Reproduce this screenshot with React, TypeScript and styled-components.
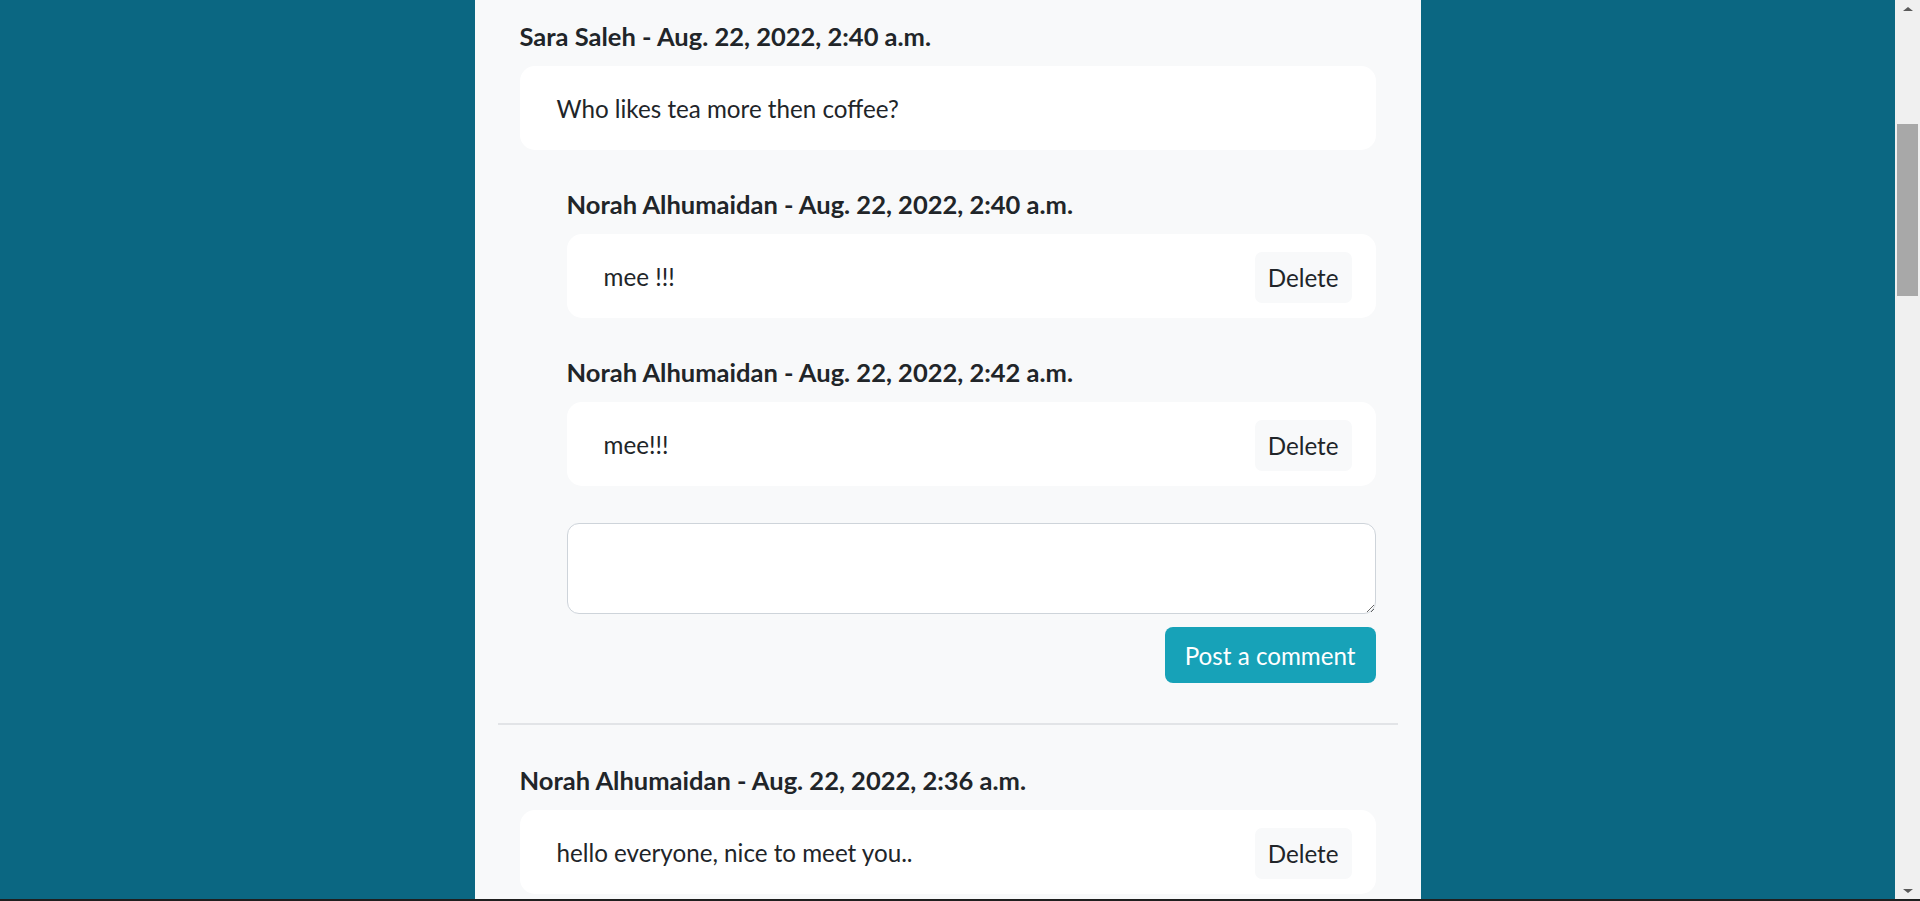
import React from "react";
import styled, { createGlobalStyle } from "styled-components";

type Comment = {
  id: number;
  author: string;
  date: string;
  text: string;
  own: boolean;
};

type Thread = Comment & { replies: Comment[] };

const threads: Thread[] = [
  {
    id: 2,
    author: "Sara Saleh",
    date: "Aug. 22, 2022, 2:40 a.m.",
    text: "Who likes tea more then coffee?",
    own: false,
    replies: [
      {
        id: 21,
        author: "Norah Alhumaidan",
        date: "Aug. 22, 2022, 2:40 a.m.",
        text: "mee !!!",
        own: true,
      },
      {
        id: 22,
        author: "Norah Alhumaidan",
        date: "Aug. 22, 2022, 2:42 a.m.",
        text: "mee!!!",
        own: true,
      },
    ],
  },
  {
    id: 3,
    author: "Norah Alhumaidan",
    date: "Aug. 22, 2022, 2:36 a.m.",
    text: "hello everyone, nice to meet you..",
    own: true,
    replies: [],
  },
];

const GlobalStyle = createGlobalStyle`
  body {
    margin: 0;
    background: #0b6782;
    color: #212529;
    font-family: Lato, "Noto Sans", sans-serif;
    overflow: hidden;
  }
`;

const Window = styled.div`
  display: flex;
  height: 100vh;
  box-sizing: border-box;
  border-bottom: 2px solid #1f1f1f;
`;

const Viewport = styled.div`
  flex: 1;
  display: flex;
  justify-content: center;
  overflow: hidden;
  background: #0b6782;
`;

const Column = styled.main`
  width: 946px;
  flex-shrink: 0;
  box-sizing: border-box;
  padding: 0 23px;
  background: #f8f9fa;
`;

const ThreadBox = styled.section`
  padding: 40px 22px;
  border-bottom: 2px solid #e2e4e7;

  &:first-child {
    padding-top: 21px;
  }
`;

const Block = styled.div`
  & + & {
    margin-top: 39px;
  }
`;

const Replies = styled.div`
  margin-top: 39px;
  padding-left: 47px;
`;

const Author = styled.h5`
  margin: 0 0 15px;
  font-size: 25.5px;
  line-height: 30px;
  font-weight: 700;
`;

const Bubble = styled.div`
  display: flex;
  align-items: center;
  justify-content: space-between;
  height: 84px;
  box-sizing: border-box;
  padding: 0 24px 0 37px;
  background: #fff;
  border-radius: 15px;
`;

const Body = styled.p`
  margin: 0;
  font-size: 24.2px;
  line-height: 37px;
`;

const DeleteButton = styled.button`
  height: 51px;
  margin-top: 3px;
  padding: 0 13px;
  border: 0;
  border-radius: 7px;
  background: #f8f9fa;
  color: #212529;
  font-family: inherit;
  font-size: 24.2px;
`;

const ReplyForm = styled.form`
  display: flex;
  flex-direction: column;
  align-items: flex-end;
  gap: 13px;
  margin-top: 37px;
`;

const TextArea = styled.textarea`
  width: 100%;
  height: 91px;
  box-sizing: border-box;
  padding: 10px 16px;
  border: 1px solid #ced4da;
  border-radius: 12px;
  background: #fff;
  font-family: inherit;
  font-size: 24px;
  resize: vertical;
`;

const PostButton = styled.button`
  height: 56px;
  padding: 0 20px;
  border: 0;
  border-radius: 8px;
  background: #17a2b8;
  color: #fff;
  font-family: inherit;
  font-size: 24.2px;
`;

const Scrollbar = styled.aside`
  width: 25px;
  flex-shrink: 0;
  display: flex;
  flex-direction: column;
  background: #f0f0f0;
`;

const Arrow = styled.div<{ $down?: boolean }>`
  height: 17px;
  display: flex;
  justify-content: center;
  align-items: center;

  &::before {
    content: "";
    border-left: 5px solid transparent;
    border-right: 5px solid transparent;
    ${(p) =>
      p.$down ? "border-top: 4px solid #5a5a5a;" : "border-bottom: 4px solid #5a5a5a;"}
  }
`;

const Track = styled.div`
  flex: 1;
  padding: 107px 2px 0;
`;

const Thumb = styled.div`
  height: 172px;
  background: #a8a8a8;
`;

function CommentItem({ comment }: { comment: Comment }) {
  return (
    <Block>
      <Author>
        {comment.author} - {comment.date}
      </Author>
      <Bubble>
        <Body>{comment.text}</Body>
        {comment.own && <DeleteButton type="button">Delete</DeleteButton>}
      </Bubble>
    </Block>
  );
}

export default function App() {
  return (
    <>
      <GlobalStyle />
      <Window>
        <Viewport>
          <Column>
            {threads.map((t) => (
              <ThreadBox key={t.id}>
                <CommentItem comment={t} />
                {t.replies.length > 0 && (
                  <Replies>
                    {t.replies.map((r) => (
                      <CommentItem key={r.id} comment={r} />
                    ))}
                    <ReplyForm onSubmit={(e) => e.preventDefault()}>
                      <TextArea />
                      <PostButton type="submit">Post a comment</PostButton>
                    </ReplyForm>
                  </Replies>
                )}
              </ThreadBox>
            ))}
          </Column>
        </Viewport>
        <Scrollbar>
          <Arrow />
          <Track>
            <Thumb />
          </Track>
          <Arrow $down />
        </Scrollbar>
      </Window>
    </>
  );
}
